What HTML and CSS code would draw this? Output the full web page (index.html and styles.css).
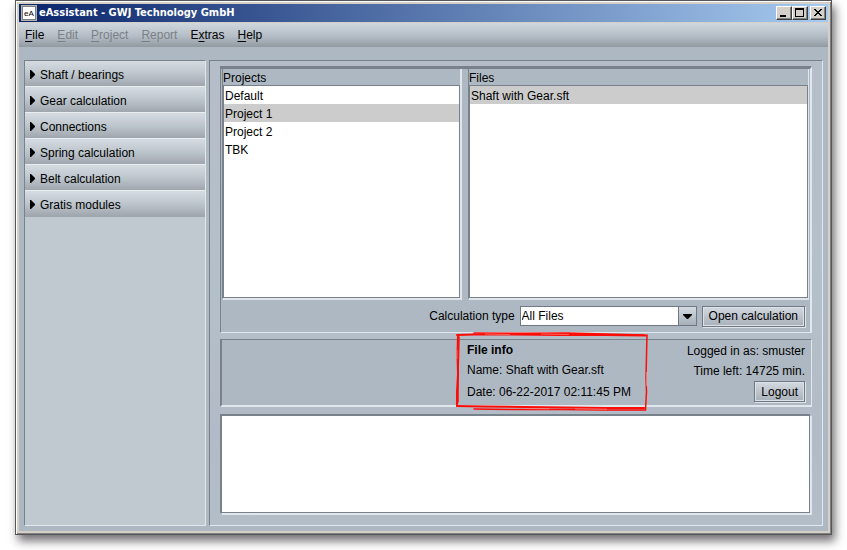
FILE: index.html
```html
<!DOCTYPE html>
<html lang="en">
<head>
<meta charset="utf-8">
<title>eAssistant - GWJ Technology GmbH</title>
<link rel="stylesheet" href="styles.css">
</head>
<body>
<div class="window">
  <header class="titlebar">
    <svg class="logo" viewBox="0 0 16 16" aria-hidden="true"><rect width="16" height="16" fill="#b5b2ac"/><rect x="1" y="1" width="14" height="14" fill="#808080"/><rect x="2" y="2" width="12" height="12" fill="#fff"/><text class="logo-text" x="3" y="11">eA</text></svg>
    <h1>eAssistant - GWJ Technology GmbH</h1>
    <div class="controls">
      <button class="control" aria-label="Minimize"><svg viewBox="0 0 12 10"><path d="M2 7h6v2H2z"/></svg></button>
      <button class="control" aria-label="Maximize"><svg viewBox="0 0 12 10"><path fill-rule="evenodd" d="M1 0h9v9H1zM2 2v6h7V2z"/></svg></button>
      <button class="control close" aria-label="Close"><svg viewBox="0 0 12 10"><path d="M2 1h2v1h1v1h2V2h1V1h2v1H9v1H8v1H7v1h1v1h1v1h1v1H8V7H7V6H5v1H4v1H2V7h1V6h1V5h1V4H4V3H3V2H2z"/></svg></button>
    </div>
  </header>
  <nav class="menu">
    <button><u>F</u>ile</button>
    <button disabled><u>E</u>dit</button>
    <button disabled><u>P</u>roject</button>
    <button disabled><u>R</u>eport</button>
    <button>E<u>x</u>tras</button>
    <button><u>H</u>elp</button>
  </nav>
  <div class="content">
    <aside class="sidebar">
      <button class="module"><svg viewBox="0 0 5 9"><path d="M0 0h1l4 4v1L1 9H0z"/></svg>Shaft / bearings</button>
      <button class="module"><svg viewBox="0 0 5 9"><path d="M0 0h1l4 4v1L1 9H0z"/></svg>Gear calculation</button>
      <button class="module"><svg viewBox="0 0 5 9"><path d="M0 0h1l4 4v1L1 9H0z"/></svg>Connections</button>
      <button class="module"><svg viewBox="0 0 5 9"><path d="M0 0h1l4 4v1L1 9H0z"/></svg>Spring calculation</button>
      <button class="module"><svg viewBox="0 0 5 9"><path d="M0 0h1l4 4v1L1 9H0z"/></svg>Belt calculation</button>
      <button class="module"><svg viewBox="0 0 5 9"><path d="M0 0h1l4 4v1L1 9H0z"/></svg>Gratis modules</button>
    </aside>
    <main class="main">
      <section class="browser">
        <div class="lists">
          <div class="pane">
            <h2>Projects</h2>
            <ul class="list">
              <li>Default</li>
              <li class="selected">Project 1</li>
              <li>Project 2</li>
              <li>TBK</li>
            </ul>
          </div>
          <div class="pane files">
            <h2>Files</h2>
            <ul class="list">
              <li class="selected">Shaft with Gear.sft</li>
            </ul>
          </div>
        </div>
        <div class="open-row">
          <label for="type">Calculation type</label>
          <div class="combo">
            <select id="type"><option>All Files</option></select>
            <span class="arrow"><svg viewBox="0 0 9 5"><path d="M0 0h9v1L5 5H4L0 1z"/></svg></span>
          </div>
          <button class="button">Open calculation</button>
        </div>
      </section>
      <section class="status">
        <div class="file-info">
          <h2>File info</h2>
          <p>Name: Shaft with Gear.sft</p>
          <p>Date: 06-22-2017 02:11:45 PM</p>
          <svg class="marker" viewBox="0 0 194 80" aria-hidden="true">
            <g fill="none" stroke="#fb0d08" stroke-linecap="round">
              <path stroke-width="2" d="M2 3L20 2.500 60 2.500 105 3 150 3 191 3.500"/>
              <path stroke-width="1.500" d="M19 1L70 1.300 112 1 150 2 189 3"/>
              <path stroke-width="2" d="M3 3L2.500 22 3 42 2 60 2 74"/>
              <path stroke-width="1.500" d="M4 5L3.500 25 3 45 3 70"/>
              <path stroke-width="2" d="M2 74L30 74.500 70 75 110 75.500 150 76 189 76"/>
              <path stroke-width="1.500" d="M19 77L64 77.500 108 77.500 150 78 190 78"/>
              <path stroke-width="1.500" d="M192 3L191.500 24 191 46 191.500 60 190.500 78"/>
            </g>
            <path fill="none" stroke="#ff8a84" stroke-width=".7" d="M30 2l25 .5M86 2l28 .5M70 76.500l24 .3M120 77l32 .2M2 18v9M191.500 40v14"/>
          </svg>
        </div>
        <div class="session">
          <p>Logged in as: smuster</p>
          <p>Time left: 14725 min.</p>
          <button class="button">Logout</button>
        </div>
      </section>
      <textarea class="messages" aria-label="Messages" readonly></textarea>
    </main>
  </div>
</div>
</body>
</html>
```
FILE: styles.css
```css
* { box-sizing: border-box; }
body { margin: 0; background: #fff; color: #000; font: 12px/18px "Liberation Sans", Arial, sans-serif; }
button, select, textarea { font: inherit; color: inherit; margin: 0; border-radius: 0; }
h1, h2, p, ul { margin: 0; padding: 0; font-size: 12px; }
h2, p { font-weight: normal; }
svg { display: block; fill: #000; }

.window {
  display: flex;
  flex-direction: column;
  min-height: calc(100vh - 15px);
  margin: 0 15px 15px;
  padding: 2px;
  border: 1px solid #55565a;
  background: #d4d0c8;
  box-shadow: inset 1px 1px #fff, inset -1px -1px #808080, 3px 6px 9px rgba(40, 35, 40, .65);
}
.titlebar {
  display: flex;
  align-items: center;
  gap: 2px;
  height: 18px;
  margin: 1px 1px 0;
  padding: 0 2px;
  background: linear-gradient(90deg, #0a246a, #a6caf0);
}
.logo { width: 16px; height: 16px; }
.logo-text { font: 8px "Liberation Sans", sans-serif; }
.titlebar h1 { flex: 1; color: #fff; font: bold 11px/18px "DejaVu Sans Condensed", "DejaVu Sans", sans-serif; }
.controls { display: flex; }
.control {
  width: 16px;
  height: 14px;
  padding: 1px;
  border: 1px solid;
  border-color: #fff #404040 #404040 #fff;
  background: #d4d0c8;
  box-shadow: inset -1px -1px #808080;
}
.control svg { width: 12px; height: 10px; }
.close { margin-left: 2px; }
.menu {
  display: flex;
  gap: 13px;
  height: 24px;
  margin: 1px 1px 0;
  padding: 0 6px;
  background: linear-gradient(#cfd7de, #b4bdc6 55%, #929aa1);
}
.menu button { padding: 0; border: 0; background: none; }
.menu button:disabled { color: #7b8086; }
.menu u { text-underline-offset: 2px; }

.content {
  flex: 1;
  display: grid;
  grid-template-columns: 182px 1fr;
  gap: 3px;
  margin: 0 1px 1px;
  padding: 13px 5px 5px;
  background: #aeb8c2;
}
.sidebar, .main { border: 1px solid; border-color: #78828a #e0e7ed #e0e7ed #78828a; }
.sidebar { background: #c0c8d0; }
.module {
  display: flex;
  align-items: center;
  gap: 5px;
  width: 100%;
  height: 26px;
  padding: 2px 5px 0;
  border: 0;
  border-bottom: 1px solid #e8edf1;
  background: linear-gradient(#d5dbe1, #bec6cd 50%, #a0a6ad);
  text-align: left;
}
.module:last-child { border-bottom-color: #a0a6ad; }
.module svg { width: 5px; height: 9px; }

.main { display: flex; flex-direction: column; padding: 5px 10px 12px; background: linear-gradient(#b5bdc9, #b4c0c9 50%, #b3bac7 80%, #b3bec8); }
.browser {
  padding-left: 1px;
  border: solid;
  border-width: 3px 2px 1px 1px;
  border-color: #79828a #e0e7ed #e0e7ed #79828a;
  background: #aeb8c2;
}
.lists { display: grid; grid-template-columns: 240px 1fr; gap: 6px; padding-right: 1px; }
.pane { display: flex; flex-direction: column; border: solid; border-width: 0 2px 2px 1px; border-color: #dfe5ea #dfe5ea #dfe5ea #79828a; }
.pane h2 { line-height: 18px; height: 16px; }
.files { border-right-width: 1px; }
.list { height: 213px; border: 1px solid #79828a; background: #fff; list-style: none; }
.list li { height: 18px; padding-left: 1px; line-height: 20px; }
.selected { background: #ccc; }
.open-row { display: flex; align-items: center; justify-content: flex-end; gap: 5px; height: 32px; padding-right: 5px; }
.combo { display: grid; grid-template-columns: 1fr 18px; width: 177px; height: 20px; border: 1px solid #707983; background: #fff; }
.combo select { grid-area: 1 / 1 / 2 / 3; appearance: none; width: 100%; padding: 0 1px; border: 0; background: none; }
.arrow { grid-area: 1 / 2; display: grid; place-items: center; border-left: 1px solid #707983; background: linear-gradient(#d3dae1, #a7b0b9); pointer-events: none; }
.arrow svg { width: 9px; height: 5px; }
.button {
  height: 21px;
  padding: 0 6px;
  border: 1px solid #707983;
  outline: 1px solid #dbe2e8;
  outline-offset: -2px;
  background: linear-gradient(#d3d9e0, #a8b0b9);
  box-shadow: 1px 1px #dfe5ea;
}
.status {
  display: grid;
  grid-template-columns: 241px 1fr auto;
  height: 68px;
  margin: 6px 0 7px;
  padding: 1px 6px 0 4px;
  border: solid;
  border-width: 1px 1px 2px 2px;
  border-color: #78828a #e0e7ed #e0e7ed #78828a;
  background: #aeb8c2;
}
.file-info { grid-column: 2; position: relative; line-height: 22px; }
.file-info h2 { font-weight: bold; line-height: 18px; }
.marker { position: absolute; left: -12px; top: -9px; width: 194px; height: 80px; }
.session { display: flex; flex-direction: column; align-items: flex-end; line-height: 20px; }
.messages {
  flex: 1;
  width: calc(100% - 2px);
  min-height: 90px;
  border: solid;
  border-width: 2px 1px 1px 2px;
  border-color: #78828a;
  background: #fff;
  box-shadow: 2px 2px #e0e7ed;
  resize: none;
  outline: 0;
}
```
